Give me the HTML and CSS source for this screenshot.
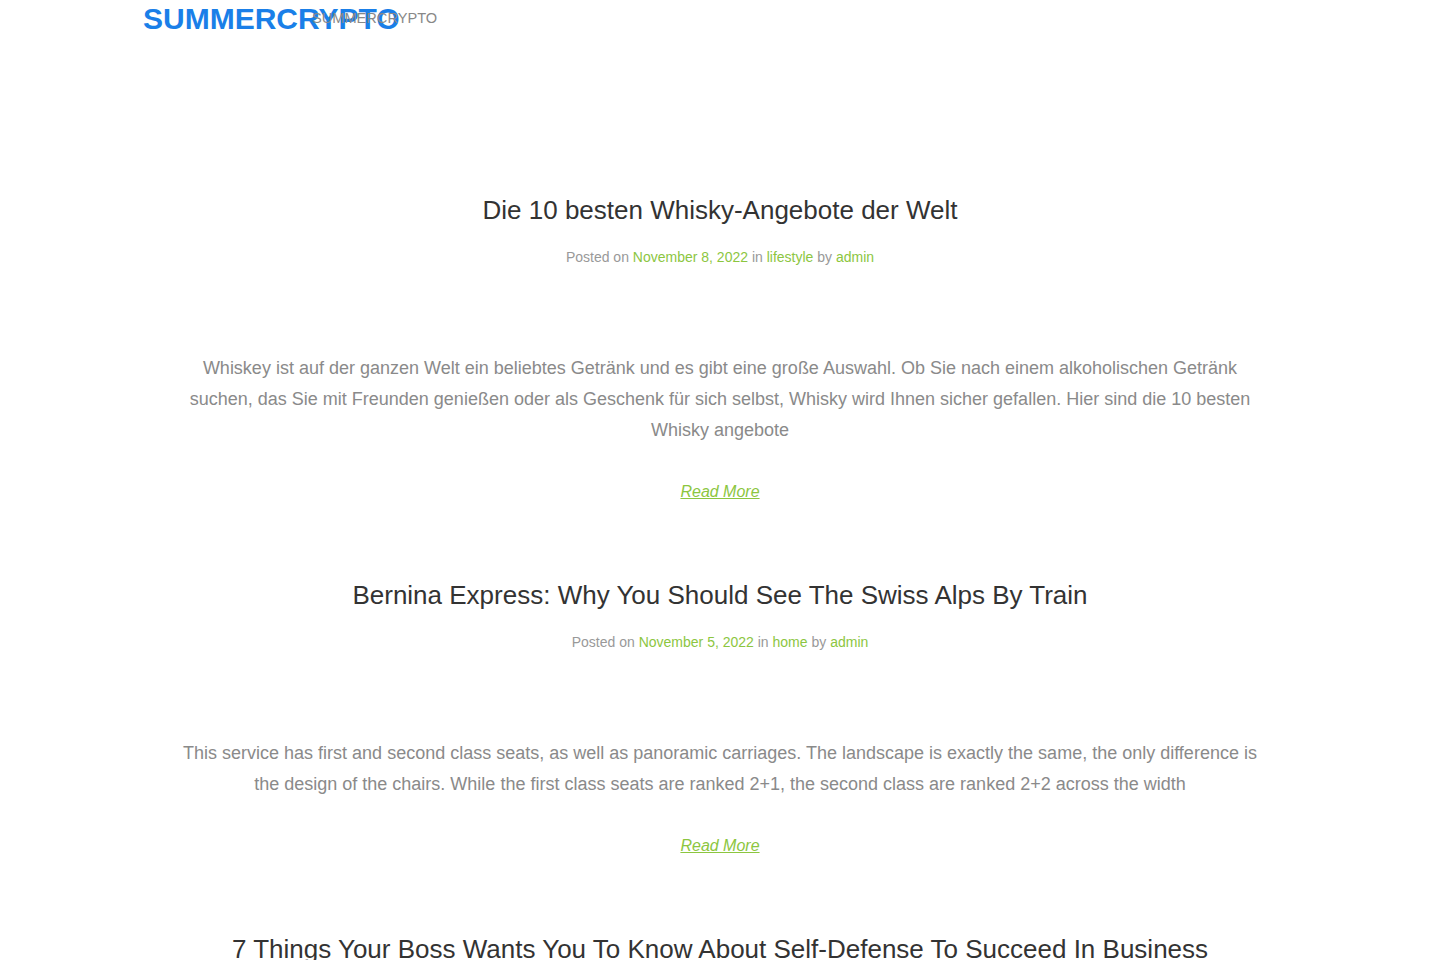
FILE: index.html
```html
<!DOCTYPE html>
<html lang="de">
<head>
<meta charset="utf-8">
<title>SUMMERCRYPTO</title>
<link rel="stylesheet" href="styles.css">
</head>
<body>
<header class="site-header">
  <div class="brand">
    <a class="site-title" href="#">SUMMERCRYPTO</a>
  </div>
  <p class="site-desc">SUMMERCRYPTO</p>
</header>
<main class="posts">
  <article class="post">
    <h2 class="post-title">Die 10 besten Whisky-Angebote der Welt</h2>
    <div class="post-meta">Posted on <a href="#">November 8, 2022</a> in <a href="#">lifestyle</a> by <a href="#">admin</a></div>
    <p class="excerpt">Whiskey ist auf der ganzen Welt ein beliebtes Getränk und es gibt eine große Auswahl. Ob Sie nach einem alkoholischen Getränk suchen, das Sie mit Freunden genießen oder als Geschenk für sich selbst, Whisky wird Ihnen sicher gefallen. Hier sind die 10 besten Whisky angebote</p>
    <a class="read-more" href="#">Read More</a>
  </article>
  <article class="post">
    <h2 class="post-title">Bernina Express: Why You Should See The Swiss Alps By Train</h2>
    <div class="post-meta">Posted on <a href="#">November 5, 2022</a> in <a href="#">home</a> by <a href="#">admin</a></div>
    <p class="excerpt">This service has first and second class seats, as well as panoramic carriages. The landscape is exactly the same, the only difference is the design of the chairs. While the first class seats are ranked 2+1, the second class are ranked 2+2 across the width</p>
    <a class="read-more" href="#">Read More</a>
  </article>
  <article class="post">
    <h2 class="post-title">7 Things Your Boss Wants You To Know About Self-Defense To Succeed In Business</h2>
  </article>
</main>
</body>
</html>
```

FILE: styles.css
```css
* { box-sizing: border-box; }
html, body { margin: 0; padding: 0; background: #fff; }
body {
  font-family: "Liberation Sans", Arial, sans-serif;
  color: #333;
}
.site-header {
  display: flex;
  align-items: flex-start;
  padding: 0 0 0 143px;
  height: 164px;
}
.brand {
  width: 169px;
  flex: none;
  white-space: nowrap;
}
.site-title {
  display: block;
  font-size: 30px;
  font-weight: 700;
  line-height: 38px;
  color: #1a7fe8;
  text-decoration: none;
}
.site-desc {
  margin: 0;
  padding-top: 9px;
  font-size: 14.6px;
  line-height: 18px;
  color: #888;
}
.posts {
  width: 1100px;
  margin: 0 auto;
}
.post {
  text-align: center;
  padding-top: 30px;
  padding-bottom: 47px;
}
.post-title {
  margin: 0;
  font-size: 26px;
  font-weight: 400;
  line-height: 32px;
  color: #333;
}
.post-meta {
  margin-top: 21px;
  font-size: 14px;
  line-height: 20px;
  color: #999;
}
.post-meta a { color: #8cc63f; text-decoration: none; }
.excerpt {
  margin: 86px 0 0;
  font-size: 18px;
  line-height: 31px;
  color: #8a8a8a;
}
.read-more {
  display: inline-block;
  margin-top: 36px;
  font-size: 16px;
  line-height: 20px;
  font-style: italic;
  color: #8cc63f;
}
```
